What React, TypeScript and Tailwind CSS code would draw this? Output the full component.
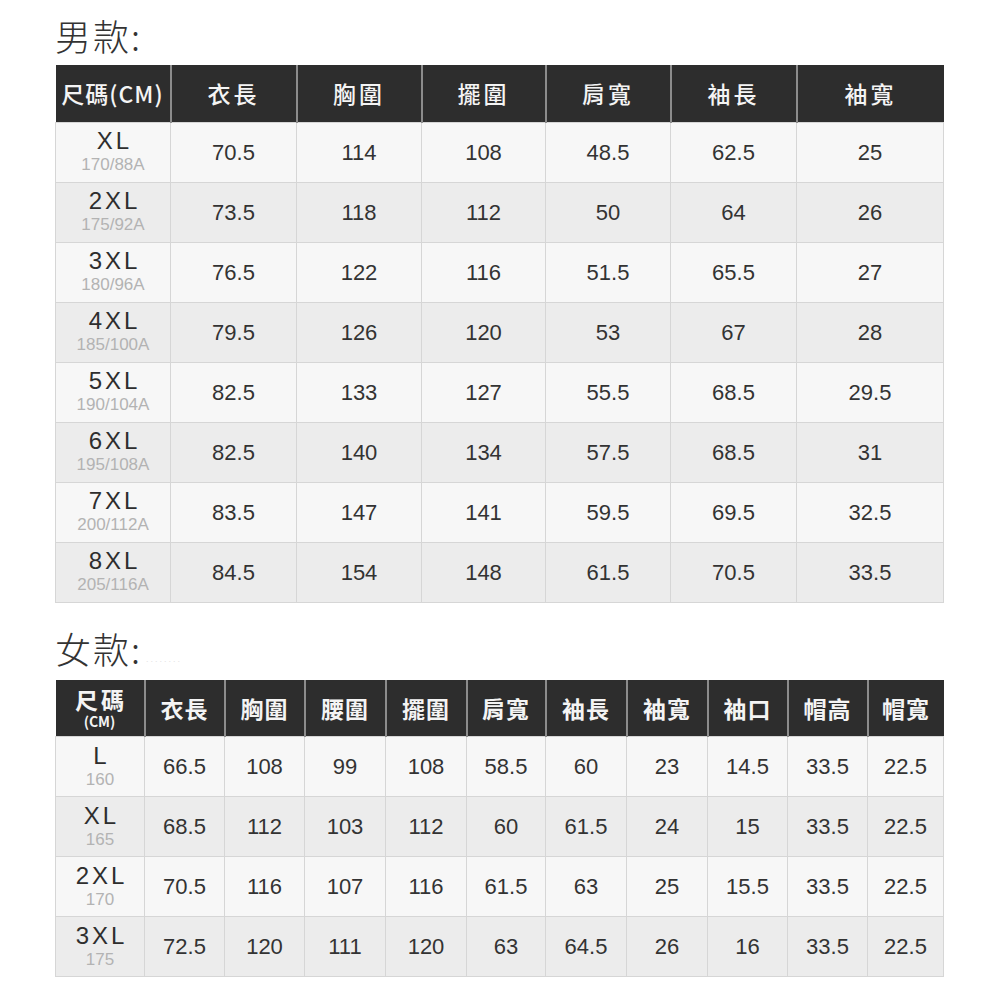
const FONT = '"Liberation Sans", "Noto Sans CJK TC", sans-serif';
const CJK = '"Noto Sans CJK TC", "Liberation Sans", sans-serif';

type Row = { size: string; sub: string; values: string[] };

const menCols = [115, 126, 125, 124, 125, 126, 147];
const menHeads = ['衣長', '胸圍', '擺圍', '肩寬', '袖長', '袖寬'];
const menRows: Row[] = [
  { size: 'XL', sub: '170/88A', values: ['70.5', '114', '108', '48.5', '62.5', '25'] },
  { size: '2XL', sub: '175/92A', values: ['73.5', '118', '112', '50', '64', '26'] },
  { size: '3XL', sub: '180/96A', values: ['76.5', '122', '116', '51.5', '65.5', '27'] },
  { size: '4XL', sub: '185/100A', values: ['79.5', '126', '120', '53', '67', '28'] },
  { size: '5XL', sub: '190/104A', values: ['82.5', '133', '127', '55.5', '68.5', '29.5'] },
  { size: '6XL', sub: '195/108A', values: ['82.5', '140', '134', '57.5', '68.5', '31'] },
  { size: '7XL', sub: '200/112A', values: ['83.5', '147', '141', '59.5', '69.5', '32.5'] },
  { size: '8XL', sub: '205/116A', values: ['84.5', '154', '148', '61.5', '70.5', '33.5'] },
];

const womenCols = [89, 80, 80, 81, 81, 79, 81, 81, 80, 80, 76];
const womenHeads = ['衣長', '胸圍', '腰圍', '擺圍', '肩寬', '袖長', '袖寬', '袖口', '帽高', '帽寬'];
const womenRows: Row[] = [
  { size: 'L', sub: '160', values: ['66.5', '108', '99', '108', '58.5', '60', '23', '14.5', '33.5', '22.5'] },
  { size: 'XL', sub: '165', values: ['68.5', '112', '103', '112', '60', '61.5', '24', '15', '33.5', '22.5'] },
  { size: '2XL', sub: '170', values: ['70.5', '116', '107', '116', '61.5', '63', '25', '15.5', '33.5', '22.5'] },
  { size: '3XL', sub: '175', values: ['72.5', '120', '111', '120', '63', '64.5', '26', '16', '33.5', '22.5'] },
];

function SizeTable({
  cols,
  firstHead,
  heads,
  rows,
  bold,
}: {
  cols: number[];
  firstHead: React.ReactNode;
  heads: string[];
  rows: Row[];
  bold?: boolean;
}) {
  return (
    <table className="table-fixed border-collapse w-[888px]" style={{ fontFamily: FONT }}>
      <colgroup>
        {cols.map((w, i) => (
          <col key={i} style={{ width: w }} />
        ))}
      </colgroup>
      <thead>
        <tr className="h-[57px] bg-[#2d2d2d]">
          <th className="border-r-2 border-[#8c8c8c] p-0 font-normal text-[#f4f4f4]">{firstHead}</th>
          {heads.map((h, i) => (
            <th
              key={h}
              className={`p-0 text-[#f4f4f4] text-[23px] ${bold ? 'font-bold tracking-[1px]' : 'font-medium tracking-[3px]'} ${
                i < heads.length - 1 ? 'border-r-2 border-[#8c8c8c]' : ''
              }`}
              style={{ fontFamily: CJK }}
            >
              {h}
            </th>
          ))}
        </tr>
      </thead>
      <tbody>
        {rows.map((r, ri) => (
          <tr key={r.size} className={`h-[60px] ${ri % 2 === 0 ? 'bg-[#f7f7f7]' : 'bg-[#ececec]'}`}>
            <td className="border border-[#d6d6d6] p-0 text-center">
              <div className="text-[24px] leading-[24px] tracking-[3px] pl-[3px] text-[#2e2e2e]">{r.size}</div>
              <div className="text-[17px] leading-[20px] text-[#b3b3b3] mt-[2px]">{r.sub}</div>
            </td>
            {r.values.map((v, vi) => (
              <td key={vi} className="border border-[#d6d6d6] p-0 text-center text-[22px] text-[#333]">
                {v}
              </td>
            ))}
          </tr>
        ))}
      </tbody>
    </table>
  );
}

export default function App() {
  return (
    <div className="w-[1000px] h-[1000px] bg-white pl-[55px] pt-[10px]">
      <div
        className="h-[50px] leading-[50px] text-[36px] font-light tracking-[2px] text-[#333]"
        style={{ fontFamily: CJK }}
      >
        男款:
      </div>
      <div className="mt-[5px]">
        <SizeTable
          cols={menCols}
          heads={menHeads}
          rows={menRows}
          firstHead={
            <span className="text-[23px] font-medium tracking-[1px]" style={{ fontFamily: CJK }}>
              尺碼(CM)
            </span>
          }
        />
      </div>
      <div
        className="mt-[20px] h-[50px] leading-[50px] text-[36px] font-light tracking-[2px] text-[#333] flex items-end"
        style={{ fontFamily: CJK }}
      >
        女款:
        <span className="text-[10px] leading-[30px] text-[#e2e2e2] tracking-[2px] ml-[4px]">........</span>
      </div>
      <div className="mt-[7px]">
        <SizeTable
          cols={womenCols}
          heads={womenHeads}
          rows={womenRows}
          bold
          firstHead={
            <div className="flex flex-col items-center" style={{ fontFamily: CJK }}>
              <span className="text-[23px] leading-[28px] font-bold tracking-[3px] pl-[3px]">尺碼</span>
              <span className="text-[14px] leading-[17px] font-bold">(CM)</span>
            </div>
          }
        />
      </div>
    </div>
  );
}
